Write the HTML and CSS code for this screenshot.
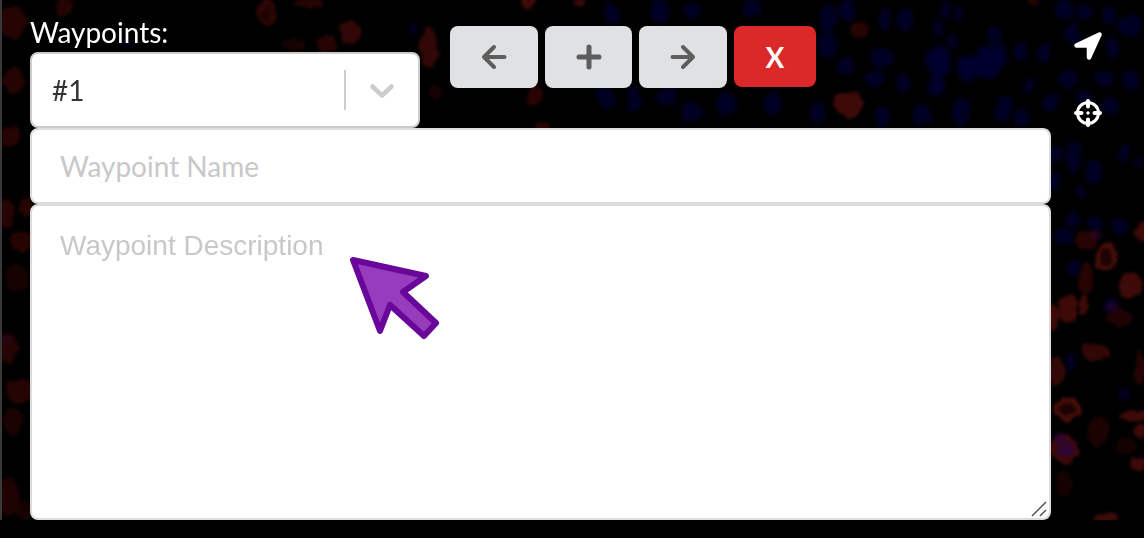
FILE: index.html
```html
<!DOCTYPE html>
<html lang="en">
<head>
<meta charset="utf-8">
<meta name="viewport" content="width=device-width, initial-scale=1">
<title>Waypoints</title>
<link rel="stylesheet" href="styles.css">
</head>
<body>
<main class="viewer">
  <svg class="tissue" viewBox="0 0 1142 520" preserveAspectRatio="xMidYMid slice" aria-hidden="true">
    <defs>
      <filter id="soft" x="-5%" y="-5%" width="110%" height="110%" color-interpolation-filters="sRGB">
        <feTurbulence type="fractalNoise" baseFrequency="0.08" numOctaves="2" seed="9" result="n"/>
        <feDisplacementMap in="SourceGraphic" in2="n" scale="10" xChannelSelector="R" yChannelSelector="G"/>
        <feGaussianBlur stdDeviation="2.500"/>
      </filter>
      <filter id="grain" x="-5%" y="-5%" width="110%" height="110%" color-interpolation-filters="sRGB">
        <feTurbulence type="fractalNoise" baseFrequency="0.1" numOctaves="2" seed="4" result="n"/>
        <feDisplacementMap in="SourceGraphic" in2="n" scale="8" xChannelSelector="R" yChannelSelector="G"/>
        <feGaussianBlur stdDeviation="1.800"/>
      </filter>
    </defs>
    <g fill="#000026" filter="url(#soft)">
      <ellipse cx="610" cy="14" rx="6" ry="10"/><ellipse cx="658" cy="12" rx="10" ry="12"/><ellipse cx="690" cy="10" rx="8" ry="8"/>
      <ellipse cx="750" cy="8" rx="9" ry="10"/><ellipse cx="825" cy="18" rx="9" ry="14"/><ellipse cx="845" cy="10" rx="9" ry="12"/>
      <ellipse cx="883" cy="18" rx="6" ry="11"/><ellipse cx="904" cy="20" rx="7" ry="12"/><ellipse cx="943" cy="10" rx="5" ry="9"/>
      <ellipse cx="957" cy="14" rx="5" ry="8"/><ellipse cx="936" cy="31" rx="4" ry="10"/><ellipse cx="951" cy="42" rx="5" ry="7"/>
      <ellipse cx="992" cy="36" rx="7" ry="9"/><ellipse cx="1062" cy="10" rx="9" ry="10"/><ellipse cx="1084" cy="13" rx="8" ry="9"/>
      <ellipse cx="1107" cy="16" rx="7" ry="10"/><ellipse cx="1128" cy="26" rx="12" ry="10"/><ellipse cx="1070" cy="33" rx="9" ry="10"/>
      <ellipse cx="879" cy="57" rx="12" ry="10"/><ellipse cx="844" cy="66" rx="8" ry="10"/><ellipse cx="872" cy="79" rx="11" ry="8"/>
      <ellipse cx="826" cy="45" rx="9" ry="12"/><ellipse cx="901" cy="83" rx="7" ry="10"/><ellipse cx="1112" cy="48" rx="7" ry="12"/>
      <ellipse cx="1042" cy="53" rx="6" ry="10"/><ellipse cx="1018" cy="52" rx="7" ry="8"/><ellipse cx="1065" cy="79" rx="11" ry="9"/>
      <ellipse cx="1103" cy="78" rx="10" ry="7"/><ellipse cx="1128" cy="80" rx="9" ry="8"/><ellipse cx="1028" cy="86" rx="6" ry="8"/>
      <ellipse cx="604" cy="98" rx="8" ry="11"/><ellipse cx="632" cy="100" rx="7" ry="12"/><ellipse cx="665" cy="97" rx="10" ry="8"/>
      <ellipse cx="690" cy="112" rx="12" ry="10"/><ellipse cx="725" cy="104" rx="10" ry="12"/><ellipse cx="770" cy="104" rx="10" ry="11"/>
      <ellipse cx="816" cy="112" rx="7" ry="12"/><ellipse cx="880" cy="117" rx="8" ry="11"/><ellipse cx="920" cy="115" rx="9" ry="11"/>
      <ellipse cx="960" cy="113" rx="9" ry="14"/><ellipse cx="1002" cy="108" rx="8" ry="13"/><ellipse cx="1020" cy="118" rx="8" ry="10"/>
      <ellipse cx="1048" cy="102" rx="9" ry="11"/><ellipse cx="1108" cy="107" rx="9" ry="8"/><ellipse cx="1082" cy="96" rx="9" ry="9"/>
      <ellipse cx="1054" cy="154" rx="7" ry="10"/><ellipse cx="1072" cy="158" rx="7" ry="17"/><ellipse cx="1092" cy="172" rx="8" ry="13"/>
      <ellipse cx="1121" cy="154" rx="7" ry="9"/><ellipse cx="1138" cy="162" rx="6" ry="7"/><ellipse cx="1079" cy="192" rx="6" ry="6"/>
      <ellipse cx="1052" cy="182" rx="7" ry="10"/><ellipse cx="1070" cy="220" rx="8" ry="9"/><ellipse cx="1093" cy="222" rx="8" ry="7"/>
      <ellipse cx="1118" cy="226" rx="8" ry="8"/><ellipse cx="1062" cy="238" rx="8" ry="8"/><ellipse cx="1072" cy="267" rx="7" ry="8"/>
      <ellipse cx="1108" cy="305" rx="7" ry="6"/><ellipse cx="1068" cy="361" rx="5" ry="11"/><ellipse cx="1122" cy="394" rx="5" ry="6"/>
      <ellipse cx="412" cy="28" rx="3" ry="5"/><ellipse cx="124" cy="43" rx="5" ry="4"/>
    </g>
    <g fill="#00002e" filter="url(#soft)">
      <ellipse cx="936" cy="62" rx="12" ry="16"/><ellipse cx="934" cy="84" rx="8" ry="12"/><ellipse cx="965" cy="68" rx="10" ry="13"/>
      <ellipse cx="985" cy="62" rx="13" ry="18"/><ellipse cx="998" cy="56" rx="8" ry="12"/>
    </g>
    <g fill="#260403" filter="url(#grain)">
      <ellipse cx="10" cy="22" rx="14" ry="16"/><ellipse cx="62" cy="6" rx="9" ry="9"/><ellipse cx="12" cy="80" rx="12" ry="12"/>
      <ellipse cx="8" cy="137" rx="10" ry="10"/><ellipse cx="4" cy="213" rx="8" ry="15"/><ellipse cx="24" cy="208" rx="7" ry="10"/>
      <ellipse cx="20" cy="242" rx="12" ry="10"/><ellipse cx="15" cy="278" rx="12" ry="14" opacity=".6"/><ellipse cx="6" cy="348" rx="10" ry="14"/>
      <ellipse cx="18" cy="391" rx="15" ry="12"/><ellipse cx="10" cy="422" rx="10" ry="14" opacity=".7"/><ellipse cx="6" cy="496" rx="11" ry="20" opacity=".8"/>
      <ellipse cx="22" cy="510" rx="9" ry="10" opacity=".6"/><ellipse cx="292" cy="45" rx="12" ry="6" opacity=".6"/>
      <ellipse cx="325" cy="44" rx="9" ry="10"/><ellipse cx="307" cy="3" rx="16" ry="5"/><ellipse cx="433" cy="92" rx="7" ry="7" opacity=".6"/>
      <ellipse cx="533" cy="95" rx="8" ry="10"/><ellipse cx="1084" cy="240" rx="12" ry="10"/><ellipse cx="1084" cy="279" rx="8" ry="15"/>
      <ellipse cx="1096" cy="432" rx="11" ry="15" opacity=".7"/><ellipse cx="1118" cy="318" rx="13" ry="9" opacity=".8"/>
      <ellipse cx="1062" cy="484" rx="8" ry="13" opacity=".6"/><ellipse cx="1124" cy="446" rx="10" ry="10" opacity=".5"/>
      <ellipse cx="1138" cy="368" rx="5" ry="18"/><ellipse cx="541" cy="127" rx="7" ry="4"/>
      <ellipse cx="857" cy="30" rx="9" ry="8"/><ellipse cx="1030" cy="2" rx="5" ry="4"/>
    </g>
    <g fill="#3d0a08" filter="url(#grain)">
      <ellipse cx="348" cy="32" rx="11" ry="12" opacity=".8"/><ellipse cx="427" cy="48" rx="9" ry="20" opacity=".8"/><ellipse cx="526" cy="2" rx="7" ry="7"/>
      <ellipse cx="576" cy="2" rx="6" ry="4"/>
      <ellipse cx="846" cy="104" rx="14" ry="14"/><ellipse cx="1141" cy="231" rx="9" ry="10"/>
      <ellipse cx="1128" cy="286" rx="12" ry="12"/><ellipse cx="1066" cy="309" rx="10" ry="14"/><ellipse cx="1081" cy="304" rx="4" ry="10"/>
      <ellipse cx="1093" cy="352" rx="14" ry="9" opacity=".8"/><ellipse cx="1054" cy="372" rx="9" ry="14" opacity=".8"/><ellipse cx="1062" cy="449" rx="14" ry="14"/>
      <ellipse cx="1132" cy="416" rx="14" ry="6"/><ellipse cx="1139" cy="432" rx="6" ry="7"/><ellipse cx="1136" cy="464" rx="9" ry="7"/>
      <ellipse cx="1104" cy="518" rx="12" ry="5"/><ellipse cx="1051" cy="318" rx="6" ry="13"/>
    </g>
    <g fill="#1c0302" stroke="#460d08" stroke-width="5" filter="url(#grain)">
      <ellipse cx="265" cy="14" rx="7" ry="11" stroke="#2f0604"/>
      <ellipse cx="1104" cy="257" rx="9" ry="11"/><ellipse cx="1066" cy="409" rx="11" ry="9"/>
    </g>
    <g fill="#2d0538" filter="url(#soft)">
      <ellipse cx="1064" cy="450" rx="8" ry="6"/><ellipse cx="1058" cy="438" rx="5" ry="5"/><ellipse cx="1110" cy="307" rx="8" ry="6" opacity=".6"/>
      <ellipse cx="1094" cy="234" rx="5" ry="5" opacity=".6"/><ellipse cx="5" cy="339" rx="4" ry="5" opacity=".4"/>
    </g>
  </svg>

  <form class="editor">
    <div class="toolbar">
      <div class="picker">
        <label class="picker-label" for="waypoint">Waypoints:</label>
        <div class="select-box">
          <select id="waypoint" class="select"><option>#1</option></select>
          <svg class="chevron" viewBox="0 0 40 40" aria-hidden="true"><path d="M10.500 16.500l9.500 9 9.500-9" fill="none" stroke="#ccc" stroke-width="4.500" stroke-linecap="round" stroke-linejoin="round"/></svg>
        </div>
      </div>
      <div class="actions">
        <button class="button" type="button" aria-label="Previous waypoint">
          <svg class="glyph" viewBox="0 0 26 26"><path d="M13 3L3 13l10 10M3 13h20.500"/></svg>
        </button>
        <button class="button button-add" type="button" aria-label="Add waypoint">
          <svg class="glyph glyph-plus" viewBox="0 0 26 26"><path d="M13 3v20M3 13h20"/></svg>
        </button>
        <button class="button" type="button" aria-label="Next waypoint">
          <svg class="glyph" viewBox="0 0 26 26"><path d="M13 3l10 10-10 10M23 13H2.500"/></svg>
        </button>
        <button class="button button-danger" type="button" aria-label="Delete waypoint">X</button>
      </div>
    </div>
    <input class="field" type="text" placeholder="Waypoint Name" aria-label="Waypoint Name">
    <div class="description">
      <textarea class="field field-area" placeholder="Waypoint Description" aria-label="Waypoint Description"></textarea>
      <svg class="grip" viewBox="0 0 18 18" aria-hidden="true"><path d="M1 16L15 2M9 16l6-6" fill="none" stroke="#555" stroke-width="1.500"/></svg>
      <svg class="pointer" viewBox="0 0 92 86" aria-hidden="true"><path d="M5 4L78 20 55 36 88 67 76 80 42 49 32 75Z" fill="#963cbd" stroke="#680799" stroke-width="6" stroke-linejoin="round"/></svg>
    </div>
  </form>

  <nav class="tools">
    <button class="tool" type="button" aria-label="Arrow">
      <svg class="tool-icon" viewBox="0 0 28 28"><path d="M25.500 2.500L15 25.500V13.500H2.500Z" fill="#fff" stroke="#fff" stroke-width="4.500" stroke-linejoin="round"/></svg>
    </button>
    <button class="tool" type="button" aria-label="Crosshair">
      <svg class="tool-icon" viewBox="0 0 28 28"><g fill="none" stroke="#fff"><circle cx="14" cy="14" r="10.500" stroke-width="3"/><path d="M14 2V7.500M14 20.500V26M2 14H7.500M20.500 14H26" stroke-width="4" stroke-linecap="round"/></g><circle cx="14" cy="14" r="1.700" fill="#fff"/></svg>
    </button>
  </nav>
</main>
</body>
</html>
```
FILE: styles.css
```css
* {
  box-sizing: border-box;
}

body {
  margin: 0;
  background: #000;
  color: #fff;
  font-family: Lato, "Liberation Sans", sans-serif;
  font-size: 28px;
}

.viewer {
  position: relative;
  display: flex;
  gap: 23px;
  padding: 16px 42px 0 28px;
  border-left: 2px solid #393939;
  overflow: hidden;
}

.tissue {
  position: absolute;
  inset: 0;
  width: 100%;
  height: 100%;
}

.editor {
  position: relative;
  display: flex;
  flex: 1;
  flex-direction: column;
  min-width: 0;
}

.toolbar {
  display: flex;
  gap: 30px;
}

.picker {
  flex: 0 1 390px;
}

.picker-label {
  display: block;
  line-height: 32px;
  padding-bottom: 4px;
}

.select-box {
  position: relative;
}

.select {
  display: block;
  width: 100%;
  height: 76px;
  padding: 0 76px 0 20px;
  border: 2px solid #ccc;
  border-radius: 8px;
  background: #fff;
  color: #333;
  font: inherit;
  appearance: none;
}

.chevron {
  position: absolute;
  top: 18px;
  right: 2px;
  width: 74px;
  height: 40px;
  border-left: 2px solid #ccc;
  pointer-events: none;
}

.actions {
  display: flex;
  align-items: flex-start;
  gap: 7px;
  padding-top: 10px;
}

.button {
  display: flex;
  align-items: center;
  justify-content: center;
  width: 88px;
  height: 62px;
  padding: 0;
  border: 0;
  border-radius: 8px;
  background: #e0e1e2;
  color: #5d5d5d;
  font: inherit;
}

.button-add {
  width: 87px;
}

.button-danger {
  width: 82px;
  height: 61px;
  background: #db2828;
  color: #fff;
  font-weight: 700;
}

.glyph {
  width: 26px;
  height: 26px;
  fill: none;
  stroke: currentColor;
  stroke-width: 4;
  stroke-linecap: round;
  stroke-linejoin: round;
}

.glyph-plus {
  stroke-width: 5;
}

.field {
  display: block;
  width: 100%;
  height: 76px;
  padding: 0 28px;
  border: 2px solid #dcdcdc;
  border-radius: 8px;
  background: #fff;
  color: #333;
  font: inherit;
}

.field::placeholder {
  color: #c8c8c8;
  opacity: 1;
}

.description {
  position: relative;
}

.field-area {
  height: 316px;
  padding: 22px 28px;
  font-family: "Liberation Sans", Arial, sans-serif;
  line-height: 36px;
  resize: none;
}

.grip {
  position: absolute;
  right: 2px;
  bottom: 2px;
  width: 18px;
  height: 18px;
}

.pointer {
  position: absolute;
  top: 52px;
  left: 318px;
  width: 92px;
  height: 86px;
  pointer-events: none;
}

.tools {
  position: relative;
  display: flex;
  flex-direction: column;
  gap: 39px;
  padding-top: 16px;
}

.tool {
  width: 28px;
  height: 28px;
  padding: 0;
  border: 0;
  background: none;
}

.tool-icon {
  display: block;
  width: 28px;
  height: 28px;
}
```
